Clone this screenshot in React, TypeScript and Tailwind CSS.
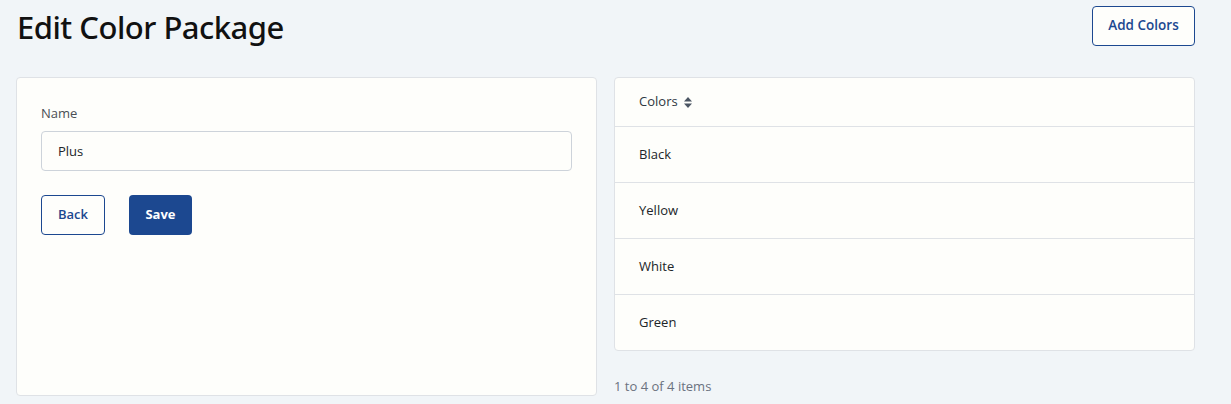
import React, { useState } from 'react';

const COLORS = ['Black', 'Yellow', 'White', 'Green'];

const SortIcon: React.FC = () => (
  <svg width="8" height="11" viewBox="0 0 8 11" className="ml-[6px] mt-[1px]">
    <path d="M4 0 L8 4.5 H0 Z" fill="#4b5563" />
    <path d="M4 11 L8 6.5 H0 Z" fill="#4b5563" />
  </svg>
);

const App: React.FC = () => {
  const [name, setName] = useState('Plus');

  return (
    <div
      className="min-h-screen bg-[#f1f5f8] pl-4 pr-[36px] text-[#212529]"
      style={{ fontFamily: '"Open Sans", "Noto Sans", sans-serif' }}
    >
      {/* header */}
      <div className="flex items-center justify-between h-[50px] pt-[4px]">
        <h1
          className="text-[31px] font-medium leading-none tracking-[-0.5px] text-[#111] pl-[1px]"
          style={{ fontFamily: '"Noto Sans", "Open Sans", sans-serif' }}
        >
          Edit Color Package
        </h1>
        <button className="h-[40px] w-[103px] rounded-[4px] border border-[#1c4890] bg-[#fefefb] text-[13.5px] font-semibold text-[#1c4890] mt-[-3px]">
          Add Colors
        </button>
      </div>

      <div className="mt-[27px] flex gap-[17px]">
        {/* form card */}
        <div className="w-[582px] h-[319px] rounded-[4px] border border-[#dfe2e6] bg-[#fefefb] px-[24px] pt-[26px]">
          <label className="block text-[13px] text-[#4a4f55] leading-[18px]">Name</label>
          <input
            value={name}
            onChange={e => setName(e.target.value)}
            className="mt-[9px] h-[40px] w-full rounded-[4px] border border-[#cdd3da] bg-[#fefefb] px-[16px] text-[13px] text-[#212529] outline-none"
          />
          <div className="mt-[24px] flex gap-[24px]">
            <button className="h-[40px] w-[64px] rounded-[4px] border border-[#1c4890] bg-[#fefefb] text-[13px] font-semibold text-[#1c4890]">
              Back
            </button>
            <button className="h-[40px] w-[63px] rounded-[4px] bg-[#1c4890] text-[13px] font-bold text-white">
              Save
            </button>
          </div>
        </div>

        {/* colors table */}
        <div className="w-[582px]">
          <div className="rounded-[4px] border border-[#dfe2e6] bg-[#fefefb]">
            <div className="flex h-[48px] items-center px-[24px] text-[13px] font-normal text-[#2f3742]">
              Colors <SortIcon />
            </div>
            {COLORS.map(c => (
              <div key={c} className="flex h-[56px] items-center border-t border-[#dfe2e6] px-[24px] text-[13px] text-[#212529]">
                {c}
              </div>
            ))}
          </div>
          <div className="mt-[26px] text-[13px] text-[#6b7280]">1 to 4 of 4 items</div>
        </div>
      </div>
    </div>
  );
};

export default App;
